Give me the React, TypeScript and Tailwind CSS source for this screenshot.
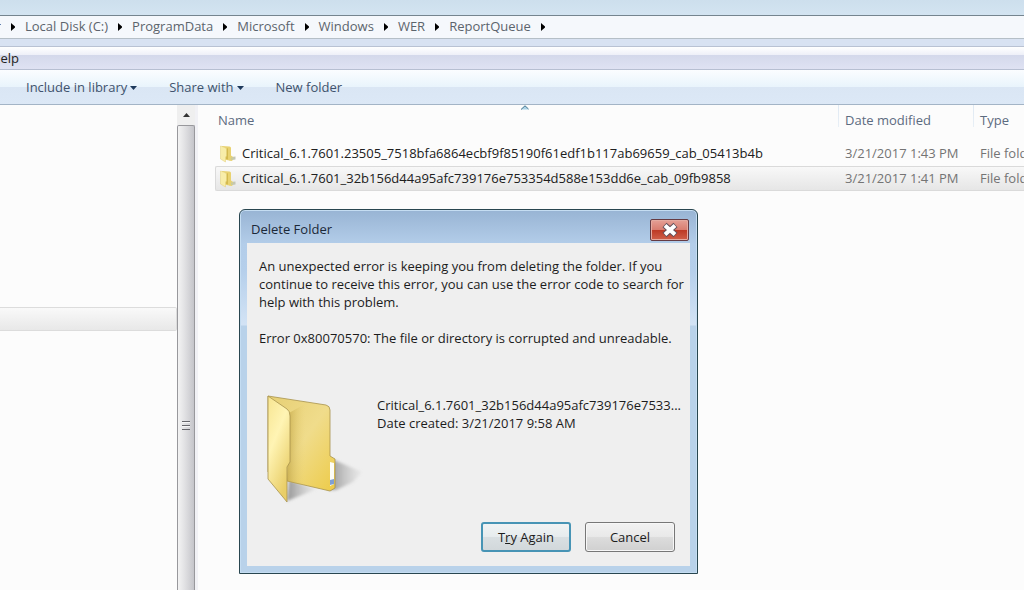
import React from "react";

const crumbs = ["Local Disk (C:)", "ProgramData", "Microsoft", "Windows", "WER", "ReportQueue"];

const rows = [
  {
    name: "Critical_6.1.7601.23505_7518bfa6864ecbf9f85190f61edf1b117ab69659_cab_05413b4b",
    date: "3/21/2017 1:43 PM",
    selected: false,
  },
  {
    name: "Critical_6.1.7601_32b156d44a95afc739176e753354d588e153dd6e_cab_09fb9858",
    date: "3/21/2017 1:41 PM",
    selected: true,
  },
];

function CrumbArrow() {
  return (
    <svg className="h-2 w-1 shrink-0" viewBox="0 0 4 8" aria-hidden="true">
      <path d="M0 0L4.500 4L0 8Z" fill="#000" />
    </svg>
  );
}

function DownArrow() {
  return (
    <svg className="h-1 w-[7px] shrink-0" viewBox="0 0 7 4" aria-hidden="true">
      <path d="M0 0H7L3.5 4Z" fill="#1e395b" />
    </svg>
  );
}

function SmallFolder() {
  return (
    <svg className="h-[18px] w-4 shrink-0" viewBox="0 0 16 18" aria-hidden="true">
      <path d="M9 15.500L15.500 14.500L15.500 11.500L11 12Z" fill="#c3c6b4" />
      <path d="M2 1L9.500 1.500Q11 1.800 11 3V10.500L13 12V15L11.500 16L2 14Z" fill="#e9d270" />
      <path d="M6.500 4L8 3V14.500L6 14Z" fill="#d3b94e" />
      <path d="M11.300 12.300h1.200v2.700h-1.200Z" fill="#b7c7b9" />
      <path d="M.5 1L5 2.500Q6.500 3.300 6.500 4.500V11L5.500 12V17L.5 14Z" fill="#f8eda9" stroke="#e2cf79" strokeWidth=".5" />
    </svg>
  );
}

function LargeFolder() {
  return (
    <svg className="h-[112px] w-[98px] shrink-0" viewBox="0 0 98 112" aria-hidden="true">
      <defs>
        <linearGradient id="back" x1="0" y1="0" x2="1" y2="1">
          <stop offset="0" stopColor="#e6cf74" />
          <stop offset=".5" stopColor="#f0dc8b" />
          <stop offset="1" stopColor="#edcb48" />
        </linearGradient>
        <linearGradient id="fold" x1="0" y1="0" x2="1" y2="0">
          <stop offset="0" stopColor="#b89b3b" stopOpacity=".65" />
          <stop offset="1" stopColor="#e5cd70" stopOpacity="0" />
        </linearGradient>
        <linearGradient id="front" x1="0" y1="0" x2=".5" y2="1">
          <stop offset="0" stopColor="#f7e591" />
          <stop offset=".45" stopColor="#fff4b4" />
          <stop offset="1" stopColor="#e9ce68" />
        </linearGradient>
        <linearGradient id="shade" x1="0" y1="0" x2="1" y2="0">
          <stop offset="0" stopColor="#777" stopOpacity=".75" />
          <stop offset="1" stopColor="#aaa" stopOpacity=".08" />
        </linearGradient>
        <filter id="soft" x="-20%" y="-20%" width="140%" height="140%">
          <feGaussianBlur stdDeviation="1.5" />
        </filter>
      </defs>
      <path d="M69 68L97 80L88 90L71 98H64Z" fill="url(#shade)" filter="url(#soft)" />
      <path d="M22 109L52 97L24 88Z" fill="url(#shade)" filter="url(#soft)" />
      <path
        d="M3 4L61 13Q65 14 65 18V64L70 67V96L65 99L22 89L3 80Z"
        fill="url(#back)"
        stroke="#a8934d"
        strokeWidth=".8"
      />
      <path d="M24 21L40 12V94L22 89Z" fill="url(#fold)" />
      <path d="M65 70L69 71V92L65 94Z" fill="#fdfdf7" />
      <path d="M65 88L69 87V92L65 93Z" fill="#7f9fd4" />
      <path
        d="M3 4L22 17Q25 19 25 24V70L22 75V110L3 87Z"
        fill="url(#front)"
        stroke="#a8934d"
        strokeWidth=".8"
        strokeLinejoin="round"
      />
    </svg>
  );
}

function DeleteDialog() {
  return (
    <section
      role="dialog"
      aria-labelledby="dialog-title"
      className="absolute top-[209px] left-[239px] flex w-[459px] flex-col rounded-t-md border border-[#294650] bg-[linear-gradient(#98b4d4_0px,#b3cde9_34px,#b5cfeb_60px,#d3e3f5_115px,#b9d2ea_116px,#b9d2ea_100%)] px-[7px] pb-[7px] shadow-[inset_0_0_0_1px_#c5ddf2]"
    >
      <header className="flex h-[33px] items-center justify-between pt-[6px] pl-1">
        <h1 id="dialog-title" className="text-[13px] text-[#1b2838]">Delete Folder</h1>
        <button
          type="button"
          aria-label="Close"
          className="mr-px flex h-[22px] w-[39px] items-center justify-center rounded-xs border border-[#653b43] bg-[linear-gradient(#e5a096_0%,#d97d70_48%,#bd3a26_52%,#d0604a_100%)] shadow-[inset_0_0_0_1px_#e5aaa0]"
        >
          <svg className="h-4 w-5" viewBox="0 0 20 16" aria-hidden="true">
            <path d="M4.500 3L15.500 13M15.500 3L4.500 13" stroke="#62505a" strokeWidth="6" />
            <path d="M5 3.500L15 12.500M15 3.500L5 12.500" stroke="#fff" strokeWidth="4" />
          </svg>
        </button>
      </header>
      <div className="flex flex-col bg-[#efefef] pt-[14px] pr-[15px] pb-[14px] pl-3 text-[13px] leading-[18px] whitespace-nowrap text-[#1c1c1c]">
        <p>
          An unexpected error is keeping you from deleting the folder. If you
          <br />
          continue to receive this error, you can use the error code to search for
          <br />
          help with this problem.
        </p>
        <p className="mt-[18px]">Error 0x80070570: The file or directory is corrupted and unreadable.</p>
        <div className="mt-[45px] ml-[6px] flex gap-[14px]">
          <LargeFolder />
          <div className="pt-1">
            <p>Critical_6.1.7601_32b156d44a95afc739176e7533...</p>
            <p>Date created: 3/21/2017 9:58 AM</p>
          </div>
        </div>
        <div className="mt-[18px] flex justify-end gap-[14px]">
          <button
            type="button"
            className="h-[30px] w-[90px] rounded-[3px] border-2 border-[#4794b5] bg-[linear-gradient(#f0f3f4_0%,#e7ecee_48%,#d9dfe2_52%,#d2d8db_100%)]"
          >
            T<span className="underline">r</span>y Again
          </button>
          <button
            type="button"
            className="h-[30px] w-[90px] rounded-[3px] border border-[#777] bg-[linear-gradient(#f2f2f2_0%,#e9e9e9_48%,#dcdcdc_52%,#d0d0d0_100%)] shadow-[inset_0_0_0_1px_#f7f7f7]"
          >
            Cancel
          </button>
        </div>
      </div>
    </section>
  );
}

export default function App() {
  return (
    <div className="relative flex h-screen flex-col overflow-hidden bg-[#fcfcfc] font-['Open_Sans','Noto_Sans',sans-serif] text-[13px]">
      <div className="h-[15px] shrink-0 bg-[linear-gradient(#cddfed,#d3e4f1)]" />
      <nav
        aria-label="Path"
        className="flex h-6 shrink-0 items-center gap-[10px] border-t border-b border-t-[#75858f] border-b-[#b5bfc7] bg-[#f5f8fc] text-[#5c646c]"
      >
        <span className="flex w-px justify-end overflow-hidden">Computer</span>
        <CrumbArrow />
        {crumbs.map((crumb) => (
          <React.Fragment key={crumb}>
            <a href="#" className="whitespace-nowrap">{crumb}</a>
            <CrumbArrow />
          </React.Fragment>
        ))}
      </nav>
      <div className="h-2 shrink-0 border-b border-[#b9c2d3] bg-[#d8e2f2]" />
      <div className="flex h-[23px] shrink-0 items-center border-b border-[#b7bfd2] bg-[linear-gradient(#ffffff_0%,#eef0f8_36%,#d4d9eb_38%,#dfe2f3_100%)] pt-[2px] text-[#222]">
        <button type="button" className="flex w-[19px] justify-end overflow-hidden">Help</button>
      </div>
      <div className="flex h-[35px] shrink-0 items-center gap-8 border-b border-[#a3b4c6] bg-[linear-gradient(#fbfdff_0%,#e9f4fc_49%,#dae6f4_51%,#dce8f6_100%)] pt-[2px] pl-[26px] text-[#40536d]">
        <button type="button" className="flex items-center gap-[3px]">Include in library <DownArrow /></button>
        <button type="button" className="flex items-center gap-[3px]">Share with <DownArrow /></button>
        <button type="button">New folder</button>
      </div>
      <main className="flex min-h-0 flex-1">
        <aside className="w-[177px] shrink-0 pt-[202px]">
          <div className="h-6 rounded-r-xs border border-l-0 border-[#dcdcdc] bg-[linear-gradient(#f9f9f9,#e8e8e8)]" />
        </aside>
        <div className="flex w-[21px] shrink-0 flex-col bg-[#f1f1f5] pr-[3px]">
          <div className="flex h-5 items-center justify-center bg-[#efefef]">
            <svg className="h-1 w-[7px]" viewBox="0 0 7 4" aria-hidden="true">
              <path d="M0 4H7L3.500 0Z" fill="#333" />
            </svg>
          </div>
          <div className="flex flex-1 flex-col items-center rounded-t-xs border border-b-0 border-[#98989c] bg-[linear-gradient(90deg,#f3f3f3_0%,#e2e2e4_40%,#c5c5ca_100%)] pt-[295px]">
            <svg className="h-[9px] w-2" viewBox="0 0 8 9" aria-hidden="true">
              <path d="M0 .5H8M0 4.500H8M0 8.500H8" stroke="#66666b" />
              <path d="M0 1.500H8M0 5.500H8" stroke="#f5f5f5" />
            </svg>
          </div>
        </div>
        <div className="relative min-w-0 flex-1 overflow-hidden pl-[17px]">
          <svg className="absolute top-0 left-[323px] h-[5px] w-2" viewBox="0 0 8 5" aria-hidden="true">
            <path d="M0 4.500L4 .5L8 4.500Z" fill="#a9d2e6" />
            <path d="M0 4.500L4 .8L7.500 4" fill="none" stroke="#4b7791" />
          </svg>
          <table className="w-full table-fixed border-separate border-spacing-0 whitespace-nowrap">
            <colgroup>
              <col />
              <col className="w-[135px]" />
              <col className="w-[51px]" />
            </colgroup>
            <thead className="text-left text-[#5c6b80]">
              <tr className="h-[37px] align-top">
                <th className="pt-[6px] pl-[3px] font-normal">Name</th>
                <th className="bg-[linear-gradient(#dfe9f3,#e8eff6)] bg-[size:1px_22px] bg-no-repeat pt-[6px] pl-[7px] font-normal">Date modified</th>
                <th className="bg-[linear-gradient(#dfe9f3,#e8eff6)] bg-[size:1px_22px] bg-no-repeat pt-[6px] pl-[7px] font-normal">Type</th>
              </tr>
            </thead>
            <tbody className="text-[#747474]">
              {rows.map((row) => {
                const cell = row.selected
                  ? "h-[25px] border-y border-[#dadada] bg-[linear-gradient(#f8f8f8,#e6e6e6)] p-0"
                  : "h-6 p-0";
                return (
                  <tr key={row.date}>
                    <td className={row.selected ? `${cell} rounded-l-xs border-l` : `${cell} border-l border-transparent`}>
                      <span className="flex items-center gap-[6px] pl-1 text-[#202020]">
                        <SmallFolder />
                        {row.name}
                      </span>
                    </td>
                    <td className={cell}><span className="block pl-[7px]">{row.date}</span></td>
                    <td className={cell}><span className="block overflow-hidden pl-[7px]">File folder</span></td>
                  </tr>
                );
              })}
            </tbody>
          </table>
        </div>
      </main>
      <DeleteDialog />
    </div>
  );
}
